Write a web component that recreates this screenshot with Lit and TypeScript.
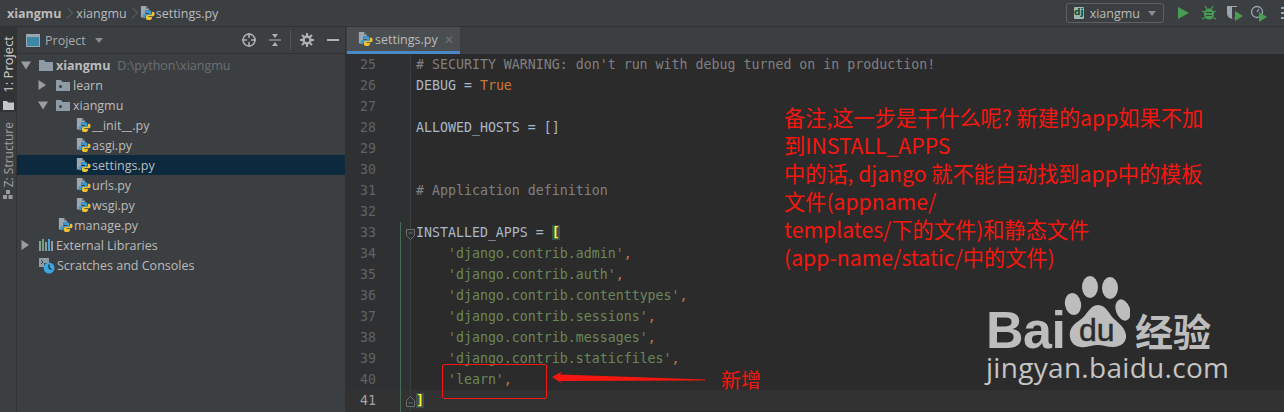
import { LitElement, html, css, svg } from "lit";
import { customElement } from "lit/decorators.js";

const pyIcon = html`<svg class="ic py" width="15" height="15" viewBox="1 1 17 17">
  <path d="M2 1h6l3 3v2H7v8H2z" fill="#9aa7b0"/><path d="M8 1v3h3z" fill="#5a6064"/>
  <path d="M10.500 5.500c-2.500 0-3.500 1-3.500 2.300V9h4v1H5.800C4.500 10 4 11.200 4 12.600c0 1.500.7 2.400 1.800 2.400H7v-1.600c0-1.200.8-2 2-2h3c1 0 1.800-.8 1.800-1.800V7.500c0-1.200-1-2-3.300-2z" fill="#3d9ad1"/>
  <path d="M11 17c2.500 0 3.500-1 3.500-2.300V13.500h-4v-1h5.200c1.300 0 1.800-1.200 1.800-2.500 0-1.600-.7-2.500-1.800-2.500H14.500v1.600c0 1.200-.8 2-2 2h-3c-1 0-1.800.8-1.800 1.800v2.100C7.700 16.200 8.700 17 11 17z" fill="#f2c12e"/>
</svg>`;
const folder = (m = true) => html`<svg class="ic" width="16" height="14" viewBox="0 0 16 14">
  <path d="M1 2h5l1.500 2H15v9H1z" fill="#8e9ba5"/>${m ? svg`<circle cx="5.500" cy="8.500" r="1.500" fill="#3c3f41"/>` : ""}</svg>`;
const arrow = (open: boolean) => html`<svg class="arr" width="10" height="10" viewBox="0 0 10 10">
  <path d=${open ? "M0 1.500h10L5 9.500z" : "M.5 0v10L8 5z"} fill="#9a9d9f"/></svg>`;

type Row = { d: number; t: string; k: string; sel?: boolean; extra?: string };
const rows: Row[] = [
  { d: 0, t: "xiangmu", k: "root", extra: "D:\\python\\xiangmu" },
  { d: 1, t: "learn", k: "closed" },
  { d: 1, t: "xiangmu", k: "open" },
  { d: 2, t: "__init__.py", k: "py" },
  { d: 2, t: "asgi.py", k: "py" },
  { d: 2, t: "settings.py", k: "py", sel: true },
  { d: 2, t: "urls.py", k: "py" },
  { d: 2, t: "wsgi.py", k: "py" },
  { d: 1, t: "manage.py", k: "py" },
  { d: 0, t: "External Libraries", k: "lib" },
  { d: 0, t: "Scratches and Consoles", k: "scr" },
];

const S = (t: string) => html`<span class="s">${t}</span>`;
const C = html`<span class="k">,</span>`;
const code: unknown[] = [
  html`<span class="c"># SECURITY WARNING: don't run with debug turned on in production!</span>`,
  html`DEBUG = <span class="k">True</span>`,
  "",
  "ALLOWED_HOSTS = []",
  "",
  "",
  html`<span class="c"># Application definition</span>`,
  "",
  html`INSTALLED_APPS = <span class="br">[</span>`,
  html`    ${S("'django.contrib.admin'")}${C}`,
  html`    ${S("'django.contrib.auth'")}${C}`,
  html`    ${S("'django.contrib.contenttypes'")}${C}`,
  html`    ${S("'django.contrib.sessions'")}${C}`,
  html`    ${S("'django.contrib.messages'")}${C}`,
  html`    ${S("'django.contrib.staticfiles'")}${C}`,
  html`    ${S("'learn'")}${C}`,
  html`<span class="br">]</span>`,
];

@customElement("app-root")
export class AppRoot extends LitElement {
  static styles = css`
    :host { display: block; width: 1284px; height: 412px; position: relative; overflow: hidden; background: #3c3f41;
      font-family: "Open Sans", "Noto Sans", sans-serif; font-size: 12.500px; color: #bbbbbb; }
    .ic { flex: none; display: block; }
    .top { height: 26px; display: flex; align-items: center; border-bottom: 1px solid #323232; padding-left: 7px; }
    .crumb { display: flex; align-items: center; }
    .crumb b { font-weight: 700; }
    .crumb .py { margin-right: 1px; }
    .chev { width: 7px; height: 7px; border: solid #55585a; border-width: 1px 1px 0 0; box-sizing: border-box; transform: rotate(45deg) scaleY(1.3); margin: 0 5px 0 3px; }
    .chev.c2 { margin: 0 4px 0 2px; }
    .sp { flex: 1; }
    .runcfg { width: 98px; height: 20px; box-sizing: border-box; border: 1px solid #5e6060; border-radius: 3px; display: flex; align-items: center; gap: 6px; padding: 0 7px; margin-right: 11px; }
    .dj { width: 12px; height: 12px; background: #9fb5ad; color: #0c4b33; font: 700 9px "DejaVu Sans", sans-serif; text-align: center; line-height: 11px; border-radius: 1px; }
    .caret { width: 0; height: 0; border: 4px solid transparent; border-top: 5px solid #8a8d8f; border-bottom: 0; margin-left: 2px; }
    .tools { display: flex; align-items: center; width: 109px; flex: none; }
    .main { display: flex; height: 385px; }
    .strip { width: 17px; box-sizing: border-box; flex: none; border-right: 1px solid #323232; display: flex; flex-direction: column; font-size: 12px; }
    .vt { writing-mode: vertical-rl; transform: rotate(180deg); line-height: 15px; white-space: nowrap; }
    .tabsel { height: 85px; background: #313335; display: flex; flex-direction: column; align-items: center; padding-top: 9px; box-sizing: border-box; gap: 8px; color: #d0d0d0; font-size: 13px; }
    .tabun { height: 70px; display: flex; flex-direction: column; align-items: center; padding-top: 10px; gap: 3px; color: #a0a2a4; }
    .panel { width: 329px; box-sizing: border-box; flex: none; display: flex; flex-direction: column; border-right: 1px solid #323232; }
    .phead { height: 26px; box-sizing: content-box; flex: none; display: flex; align-items: center; padding-left: 9px; border-bottom: 1px solid #323232; }
    .phead .ptitle { margin-left: 5px; color: #a8abad; }
    .picons { display: flex; align-items: center; margin-right: 5px; }
    .picons .i2 { margin-left: 11px; }
    .picons .i3 { margin-left: 9px; }
    .sepv { width: 1px; height: 20px; background: #515355; margin-left: 8px; }
    .picons .i4 { margin-left: 12px; }
    .tree { padding-top: 1px; }
    .row { height: 20px; display: flex; align-items: center; white-space: nowrap; }
    .row.sel { background: #0d293e; }
    .ar { width: 17px; flex: none; display: flex; justify-content: center; margin-right: 4px; }
    .row .py { margin-right: -1px; }
    .row .t { margin-left: 2px; }
    .row .bold { font-weight: 700; }
    .row .gr { margin-left: 7px; color: #6c6f71; }
    .d1 { padding-left: 17px; }
    .d2 { padding-left: 59px; }
    .dpy1 { padding-left: 41px; }
    .scr { margin-left: 21px; }
    .ed { flex: 1; display: flex; flex-direction: column; min-width: 0; }
    .tabs { height: 27px; flex: none; display: flex; }
    .tab { width: 113px; box-sizing: border-box; margin-left: 1px; background: #4a4e50; border-bottom: 3px solid #4a88c7; display: flex; align-items: center; padding-left: 11px; gap: 2px; }
    .tab .x { color: #6e7173; margin-left: 4px; font-size: 12px; }
    .body { flex: 1; background: #2b2b2b; display: flex; position: relative; font: 13.270px/21px "DejaVu Sans Mono", monospace; color: #a9b7c6; }
    .gut { width: 65px; box-sizing: border-box; flex: none; background: #2f3031; border-right: 1px solid #3a3c3d; position: relative; color: #5f6366; }
    .gut div { height: 21px; padding-left: 14px; }
    .gut .cur { color: #a4a3a3; background: #323232; }
    .gut .bar { position: absolute; left: 54px; top: 168px; bottom: 0; width: 1px; padding: 0; height: auto; background: #4a6a58; }
    .fold { position: absolute; left: 60px; }
    .f1 { top: 175px; }
    .f2 { top: 342px; }
    .lines { flex: 1; padding-left: 5px; white-space: pre; }
    .lines div { height: 21px; }
    .lines .cur { background: #323232; margin-left: -5px; padding-left: 5px; }
    .c { color: #808080; } .k { color: #cc7832; } .s { color: #6a8759; }
    .br { background: #3b514d; color: #ffef28; font-weight: 700; }
    .note { position: absolute; left: 784px; top: 103px; color: #f5170f; font: 21.200px/28px "Noto Sans CJK SC", sans-serif; white-space: nowrap; }
    .box { position: absolute; left: 442px; top: 364px; width: 105px; height: 35px; box-sizing: border-box; border: 1px solid #f5170f; border-radius: 2px; }
    .arrow { position: absolute; left: 552px; top: 370px; }
    .xz { position: absolute; left: 721px; top: 366px; color: #f5170f; font: 20px/28px "Noto Sans CJK SC", sans-serif; }
    .logo { position: absolute; left: 986px; top: 276px; width: 235px; color: #bdbdbd; }
    .lrow { display: flex; align-items: flex-end; height: 73px; }
    .bai { font: 700 52px/38px "Liberation Sans", sans-serif; width: 78px; letter-spacing: -.5px; }
    .jy { font: 700 38px/38px "Noto Sans CJK SC", sans-serif; margin-left: 5px; white-space: nowrap; }
    .url { font: 28px/32px "Open Sans", sans-serif; color: #c4c4c4; white-space: nowrap; margin-top: 2px; letter-spacing: .3px; }
    .dutext { font: 400 32px "Liberation Sans", sans-serif; fill: #2b2b2b; stroke: #2b2b2b; stroke-width: .5px; }
  `;

  private rowTpl(r: Row) {
    let cls = "row";
    if (r.sel) cls += " sel";
    if (r.k === "py") cls += r.d === 2 ? " d2" : " dpy1";
    else if (r.d === 1) cls += " d1";
    let lead: unknown;
    if (r.k === "py") lead = pyIcon;
    else if (r.k === "root") lead = html`<div class="ar">${arrow(true)}</div>${folder(false)}`;
    else if (r.k === "closed") lead = html`<div class="ar">${arrow(false)}</div>${folder()}`;
    else if (r.k === "open") lead = html`<div class="ar">${arrow(true)}</div>${folder()}`;
    else if (r.k === "lib")
      lead = html`<div class="ar">${arrow(false)}</div><svg class="ic" width="16" height="12" viewBox="0 0 16 12">
        <path d="M1 2h2v10H1z" fill="#8e9ba5"/><path d="M4 0h2v12H4z" fill="#6fa86b"/><path d="M7 3h2v9H7z" fill="#8e9ba5"/><path d="M10 0h2v12h-2z" fill="#4aa3d8"/><path d="M13 2h2v10h-2z" fill="#8e9ba5"/></svg>`;
    else
      lead = html`<svg class="ic scr" width="17" height="17" viewBox="0 0 17 17">
        <path d="M1 1h10v5H6v4H1z" fill="#8e9ba5"/><path d="M3 3l2 2-2 2" stroke="#3c3f41" fill="none"/>
        <circle cx="11" cy="11" r="5.500" fill="#3aa5e0"/><path d="M11 7.500V11l2.500 1.500" stroke="#23272a" stroke-width="1.200" fill="none"/></svg>`;
    return html`<div class=${cls}>${lead}<span class="t ${r.k === "root" ? "bold" : ""}">${r.t}</span>${r.extra ? html`<span class="gr">${r.extra}</span>` : ""}</div>`;
  }

  render() {
    return html`
      <div class="top">
        <div class="crumb"><b>xiangmu</b><span class="chev"></span><span>xiangmu</span><span class="chev c2"></span>${pyIcon}<span>settings.py</span></div>
        <div class="sp"></div>
        <div class="runcfg"><span class="dj">dj</span><span>xiangmu</span><span class="caret"></span></div>
        <div class="tools">
          <svg class="ic" width="16" height="16" viewBox="0 0 16 16"><path d="M3 2l11 6-11 6z" fill="#499c54"/></svg>
          <svg class="ic" style="margin-left:10px" width="16" height="16" viewBox="0 0 16 16"><ellipse cx="8" cy="9" rx="5" ry="5.500" fill="#499c54"/><path d="M4 1l2 3M12 1l-2 3M1 6l3 1.500M15 6l-3 1.500M1 14l3-1.500M15 14l-3-1.500" stroke="#499c54" stroke-width="1.300"/><path d="M5 7.500h6M5 10.500h6" stroke="#3c3f41" stroke-width="1.200"/></svg>
          <svg class="ic" style="margin-left:9px" width="18" height="18" viewBox="0 0 18 18"><path d="M1 2h10v7c0 4-3 5-5 6-2-1-5-2-5-6z" fill="#9aa7b0"/><path d="M6 3h5v6c0 3-3 5-5 6z" fill="#3c3f41"/><path d="M9 7l8 5-8 5z" fill="#499c54"/></svg>
          <svg class="ic" style="margin-left:6px" width="18" height="18" viewBox="0 0 18 18"><circle cx="7" cy="8" r="5.500" fill="none" stroke="#9aa7b0" stroke-width="1.300"/><path d="M7 8l2-3" stroke="#9aa7b0" stroke-width="1.300"/><path d="M9 8l8 5-8 5z" fill="#499c54"/></svg>
          <svg class="ic" style="margin-left:13px" width="3" height="14" viewBox="0 0 3 14"><path d="M0 1h3v2H0zM0 6h3v2H0zM0 11h3v2H0z" fill="#9aa7b0"/></svg>
        </div>
      </div>
      <div class="main">
        <div class="strip">
          <div class="tabsel">
            <span class="vt">1: Project</span>
            <svg class="ic" width="11" height="9" viewBox="0 0 11 9"><path d="M0 0h4l1 1.500h6V9H0z" fill="#c4c6c8"/></svg>
          </div>
          <div class="tabun">
            <span class="vt">Z: Structure</span>
            <svg class="ic" width="10" height="10" viewBox="0 0 10 10"><path d="M3 0h4v4H3zM0 5h4v4H0zM5.500 5h4v4h-4z" fill="#9a9d9f"/></svg>
          </div>
        </div>
        <div class="panel">
          <div class="phead">
            <svg class="ic" width="14" height="13" viewBox="0 0 14 13"><rect width="14" height="13" fill="#9aa7b0"/><rect x="1" y="3" width="12" height="9" fill="#3f87a6"/></svg>
            <span class="ptitle">Project</span>
            <span class="caret" style="margin-left:9px"></span>
            <div class="sp"></div>
            <div class="picons">
              <svg class="ic" width="16" height="16" viewBox="0 0 16 16"><circle cx="8" cy="8" r="6" fill="none" stroke="#afb1b3" stroke-width="1.500"/><path d="M8 1v5M8 10v5M1 8h5M10 8h5" stroke="#afb1b3" stroke-width="1.500"/></svg>
              <svg class="ic i2" width="14" height="14" viewBox="0 0 14 14"><path d="M1 7h12" stroke="#afb1b3"/><path d="M4 1h6L7 5zM4 13h6L7 9z" fill="#afb1b3"/></svg>
              <span class="sepv"></span>
              <svg class="ic i3" width="14" height="14" viewBox="0 0 14 14"><circle cx="7" cy="7" r="3.500" fill="none" stroke="#afb1b3" stroke-width="2.500"/><path d="M7 0v3M7 11v3M0 7h3M11 7h3M2 2l2 2M10 10l2 2M12 2l-2 2M4 10l-2 2" stroke="#afb1b3" stroke-width="2"/></svg>
              <svg class="ic i4" width="14" height="14" viewBox="0 0 14 14"><path d="M1 6h12v2H1z" fill="#afb1b3"/></svg>
            </div>
          </div>
          <div class="tree">${rows.map((r) => this.rowTpl(r))}</div>
        </div>
        <div class="ed">
          <div class="tabs"><div class="tab">${pyIcon}<span>settings.py</span><span class="x">✕</span></div></div>
          <div class="body">
            <div class="gut">
              ${code.map((_, i) => html`<div class=${i === 16 ? "cur" : ""}>${25 + i}</div>`)}
              <div class="bar"></div>
            </div>
            <div class="lines">${code.map((l, i) => html`<div class=${i === 16 ? "cur" : ""}>${l}</div>`)}</div>
            <svg class="fold f1" width="9" height="11" viewBox="0 0 9 11"><path d="M.5.500h8v6l-4 4-4-4zM2.500 4h4" fill="#2f3031" stroke="#6a6d70"/></svg>
            <svg class="fold f2" width="9" height="11" viewBox="0 0 9 11"><path d="M.5 10.500h8v-6l-4-4-4 4zM2.500 7h4" fill="#2f3031" stroke="#6a6d70"/></svg>
          </div>
        </div>
      </div>
      <div class="note">备注,这一步是干什么呢? 新建的app如果不加<br>到INSTALL_APPS<br>中的话, django 就不能自动找到app中的模板<br>文件(appname/<br>templates/下的文件)和静态文件<br>(app-name/static/中的文件)</div>
      <div class="box"></div>
      <svg class="arrow" width="155" height="14" viewBox="0 0 155 14"><path d="M0 7L10 1.500 8 4.500 153 9.500v1L8 11l2 2.500z" fill="#f5170f"/></svg>
      <div class="xz">新增</div>
      <div class="logo">
        <div class="lrow">
          <span class="bai">Bai</span>
          <svg class="ic" width="66" height="73" viewBox="0 0 66 73">
            <ellipse cx="26" cy="11" rx="8" ry="11" fill="#bdbdbd"/><ellipse cx="46" cy="12" rx="8" ry="11" fill="#bdbdbd"/>
            <ellipse cx="9" cy="28" rx="8" ry="11" fill="#bdbdbd" transform="rotate(-10 9 28)"/><ellipse cx="59" cy="34" rx="7" ry="11" fill="#bdbdbd" transform="rotate(-20 59 34)"/>
            <path d="M34 29c-8 0-10 9-18 15-8 5-11 10-10 17 1 8 8 11 15 10 6-1 9-2 13-2 5 0 9 2 15 2 8 0 14-5 13-12-1-7-6-11-12-16-5-5-8-14-16-14z" fill="#bdbdbd"/>
            <text class="dutext" x="15" y="65">du</text>
          </svg>
          <span class="jy">经验</span>
        </div>
        <div class="url">jingyan.baidu.com</div>
      </div>
    `;
  }
}
